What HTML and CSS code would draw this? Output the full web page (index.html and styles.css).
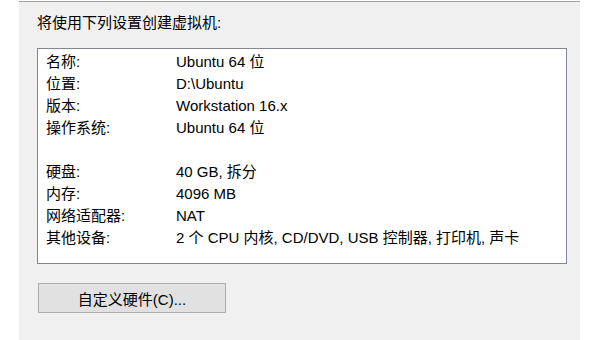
FILE: index.html
```html
<!DOCTYPE html>
<html lang="zh-CN">
<head>
    <meta charset="UTF-8">
    <title>新建虚拟机向导</title>
    <link rel="stylesheet" href="styles.css">
</head>
<body>
    <div class="panel">
        <div class="intro">将使用下列设置创建虚拟机:</div>

        <div class="summary">
            <div class="row"><div class="label">名称:</div><div class="value">Ubuntu 64 位</div></div>
            <div class="row"><div class="label">位置:</div><div class="value">D:\Ubuntu</div></div>
            <div class="row"><div class="label">版本:</div><div class="value">Workstation 16.x</div></div>
            <div class="row"><div class="label">操作系统:</div><div class="value">Ubuntu 64 位</div></div>
            <div class="row gap"></div>
            <div class="row"><div class="label">硬盘:</div><div class="value">40 GB, 拆分</div></div>
            <div class="row"><div class="label">内存:</div><div class="value">4096 MB</div></div>
            <div class="row"><div class="label">网络适配器:</div><div class="value">NAT</div></div>
            <div class="row"><div class="label">其他设备:</div><div class="value">2 个 CPU 内核, CD/DVD, USB 控制器, 打印机, 声卡</div></div>
        </div>

        <button class="hw-btn">自定义硬件(C)...</button>
    </div>
</body>
</html>
```
FILE: styles.css
```css
body {
    margin: 0;
    background-color: #fff;
    font-family: "Liberation Sans", "Noto Sans CJK SC", sans-serif;
    font-size: 15px;
    color: #000;
}

.panel {
    margin: 1px 0 0 19px;
    width: 561px;
    height: 339px;
    padding: 10px 0 0 18px;
    background-color: #f0f0f0;
    border-top: 1px solid #a0a0a0;
    box-sizing: border-box;
}

.intro {
    line-height: 22px;
    margin-bottom: 14px;
}

.summary {
    width: 530px;
    box-sizing: border-box;
    background-color: #fff;
    border: 1px solid #828790;
    padding: 2px 8px 14px;
}

.row {
    display: flex;
    height: 22px;
    line-height: 22px;
    white-space: nowrap;
}

.label {
    width: 130px;
}

.hw-btn {
    display: block;
    margin: 19px 0 0 1px;
    width: 188px;
    height: 30px;
    padding: 0;
    background-color: #e1e1e1;
    border: 1px solid #adadad;
    font-family: "Liberation Sans", "Noto Sans CJK SC", sans-serif;
    font-size: 15px;
    color: #000;
}
```
